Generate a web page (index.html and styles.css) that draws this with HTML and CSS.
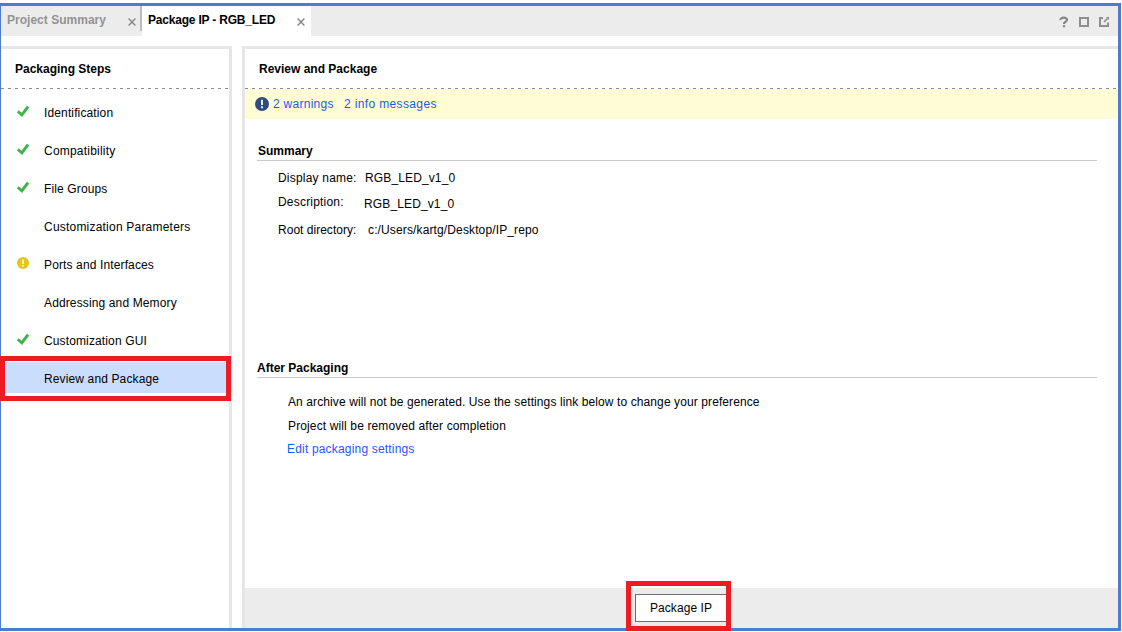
FILE: index.html
```html
<!DOCTYPE html>
<html lang="en">
<head>
<meta charset="utf-8">
<title>Package IP - RGB_LED</title>
<link rel="stylesheet" href="styles.css">
</head>
<body>
<svg width="0" height="0" class="defs">
  <symbol id="check" viewBox="0 0 12 12"><path d="M.8 6.4 4.9 9.8 11 1.6" fill="none" stroke="#3fb24d" stroke-width="2.9"/></symbol>
  <symbol id="close" viewBox="0 0 8 8"><path d="M.6.6 7.4 7.4M7.4.6.6 7.4" fill="none" stroke="#858585" stroke-width="1.4"/></symbol>
</svg>
<div class="window">
  <header class="tabbar">
    <div class="tab tab-idle"><span class="t-project">Project Summary</span><svg class="close"><use href="#close"/></svg></div>
    <div class="tab tab-active"><span class="t-package">Package IP - RGB_LED</span><svg class="close"><use href="#close"/></svg></div>
    <div class="tools">
      <svg width="10" height="12" viewBox="0 0 10 12"><path d="M1.4 4.1C1.2 1 8 .9 8 3.7 8 5.8 5 5.6 5 8" fill="none" stroke="#858585" stroke-width="2.2"/><path d="M3.9 9.2h2.3v2H3.9z" fill="#858585"/></svg>
      <svg width="10" height="10" viewBox="0 0 10 10"><path d="M1 1h8v8H1z" fill="none" stroke="#8e8e8e" stroke-width="2"/></svg>
      <svg width="10" height="10" viewBox="0 0 10 10"><path d="M4 1H1v8h8V5.6" fill="none" stroke="#8e8e8e" stroke-width="2"/><path d="M5 5 8.6 1.4" stroke="#8e8e8e" stroke-width="1.5"/><path d="M7 0h3v3z" fill="#8e8e8e"/></svg>
    </div>
  </header>
  <main class="panels">
    <aside class="steps">
      <h2 class="title title-steps"><span class="t-steps">Packaging Steps</span></h2>
      <ul class="list">
        <li><svg class="mark"><use href="#check"/></svg><span>Identification</span></li>
        <li><svg class="mark"><use href="#check"/></svg><span class="wide">Compatibility</span></li>
        <li><svg class="mark"><use href="#check"/></svg><span>File Groups</span></li>
        <li><i class="mark"></i><span class="wide">Customization Parameters</span></li>
        <li><svg class="mark" viewBox="0 0 12 12"><circle cx="6" cy="6" r="6" fill="#e8c41c"/><path d="M6 2.3v4.6M6 8v1.7" stroke="#fff8d0" stroke-width="1.8"/></svg><span>Ports and Interfaces</span></li>
        <li><i class="mark"></i><span>Addressing and Memory</span></li>
        <li><svg class="mark"><use href="#check"/></svg><span>Customization GUI</span></li>
        <li class="selected"><i class="mark"></i><span>Review and Package</span></li>
      </ul>
    </aside>
    <section class="review">
      <h2 class="title title-review"><span class="t-review">Review and Package</span></h2>
      <div class="notice">
        <svg width="14" height="14" viewBox="0 0 14 14"><circle cx="7" cy="7" r="7" fill="#304b7f"/><path d="M7 2.7v5.4M7 9.3v2" stroke="#fff" stroke-width="1.8"/></svg>
        <a class="n1">2 warnings</a><a class="n2">2 info messages</a>
      </div>
      <div class="content">
        <h3 class="heading heading-summary">Summary</h3>
        <dl class="fields">
          <div class="field f-name"><dt>Display name:</dt><dd>RGB_LED_v1_0</dd></div>
          <div class="field f-desc"><dt>Description:</dt><dd>RGB_LED_v1_0</dd></div>
          <div class="field f-root"><dt>Root directory:</dt><dd>c:/Users/kartg/Desktop/IP_repo</dd></div>
        </dl>
        <h3 class="heading heading-after">After Packaging</h3>
        <div class="after">
          <p class="p1"><span>An archive will not be generated. Use the settings link below to change your preference</span></p>
          <p class="p2"><span>Project will be removed after completion</span></p>
          <p class="p3"><a>Edit packaging settings</a></p>
        </div>
      </div>
      <footer class="footer"><button class="package"><span>Package IP</span></button></footer>
    </section>
  </main>
</div>
<div class="callout callout-step"></div>
<div class="callout callout-button"></div>
</body>
</html>
```
FILE: styles.css
```css
* { box-sizing: border-box; }
body { margin: 0; padding-top: 3px; height: 632px; overflow: hidden; background: #fff; color: #000; font: 12px/16px "Liberation Sans", Arial, sans-serif; letter-spacing: .13px; }
h2, h3, p, ul, dl, dd { margin: 0; padding: 0; font-size: 12px; }
span, a, dt, dd { white-space: nowrap; }
a { color: #1a5af0; }
.defs { position: absolute; }

.window { display: flex; flex-direction: column; width: 1121px; height: 628px; border: 3px solid #4a7dce; border-left-width: 1px; }
.tabbar { display: flex; height: 30px; background: #ececec; font-weight: bold; }
.tab { display: flex; padding-top: 6px; }
.tab-idle { width: 141px; padding-left: 6px; color: #929292; justify-content: space-between; padding-right: 6px; background: linear-gradient(#bcbcbc, #bcbcbc) right top / 2px 25px no-repeat; }
.tab-active { width: 169px; padding-left: 6px; padding-right: 6px; justify-content: space-between; background: #fff; }
.t-project { letter-spacing: .02px; }
.t-package { letter-spacing: -.2px; }
.close { width: 8px; height: 8px; margin-top: 6px; }
.tools { display: flex; align-items: center; gap: 10px; margin-left: auto; padding: 2px 9px 0 0; }

.panels { display: flex; gap: 10px; flex: 1; padding-top: 10px; }
.steps { width: 231px; border: solid #e6e6e6; border-width: 3px 3px 0 0; }
.review { display: flex; flex-direction: column; flex: 1; border: solid #e6e6e6; border-width: 3px 0 0 3px; }
.title { height: 40px; padding: 12px 0 0 14px; letter-spacing: 0; background: repeating-linear-gradient(90deg, #8c8c8c 0 3px, transparent 3px 7px) bottom / 100% 1px no-repeat; }
.list { padding-top: 5px; list-style: none; }
.list li { display: flex; align-items: center; height: 38px; padding-left: 16px; }
.list .selected { height: 31px; margin: 2px 3px 0 4px; padding: 2px 0 0 12px; background: #cbddfd; }
.list .wide { letter-spacing: .21px; }
.mark { width: 12px; height: 12px; margin: -4px 15px 0 0; flex: none; }

.notice { display: flex; height: 30px; padding: 7px 0 0 10px; background: #fffcd6; }
.notice svg { margin: 1px 4px 0 0; }
.n1 { width: 71px; letter-spacing: .27px; }
.n2 { letter-spacing: .36px; }
.content { flex: 1; padding: 23px 21px 0 12px; }
.heading { height: 19px; padding-top: 1px; letter-spacing: 0; border-bottom: 1px solid #cacaca; }
.heading-summary { text-indent: 1px; }
.fields { height: 198px; padding: 9px 0 0 21px; }
.field { display: flex; }
.field dt { flex: none; }
.f-name dt { width: 87px; letter-spacing: .2px; }
.f-desc { margin-top: 8px; }
.f-desc dt { width: 86px; letter-spacing: .2px; }
.f-desc dd { padding-top: 2px; }
.f-root { margin-top: 10px; }
.f-root dt { width: 90px; letter-spacing: .02px; }
.after { padding: 16px 0 0 31px; }
.p1 { letter-spacing: .1px; }
.p2 { padding-top: 8px; }
.p3 { padding-top: 7px; margin-left: -1px; letter-spacing: .18px; }
.footer { height: 40px; padding: 6px 0 0 390px; background: #ececec; }
.package { display: block; width: 92px; height: 28px; padding: 0; border: 1px solid #6d6d6d; background: #fff; color: #000; font: inherit; letter-spacing: .08px; }

.callout { position: absolute; border: 5px solid #ed1c24; }
.callout-step { left: 0; top: 356px; width: 231px; height: 45px; }
.callout-button { left: 626px; top: 581px; width: 105px; height: 50px; }
```
